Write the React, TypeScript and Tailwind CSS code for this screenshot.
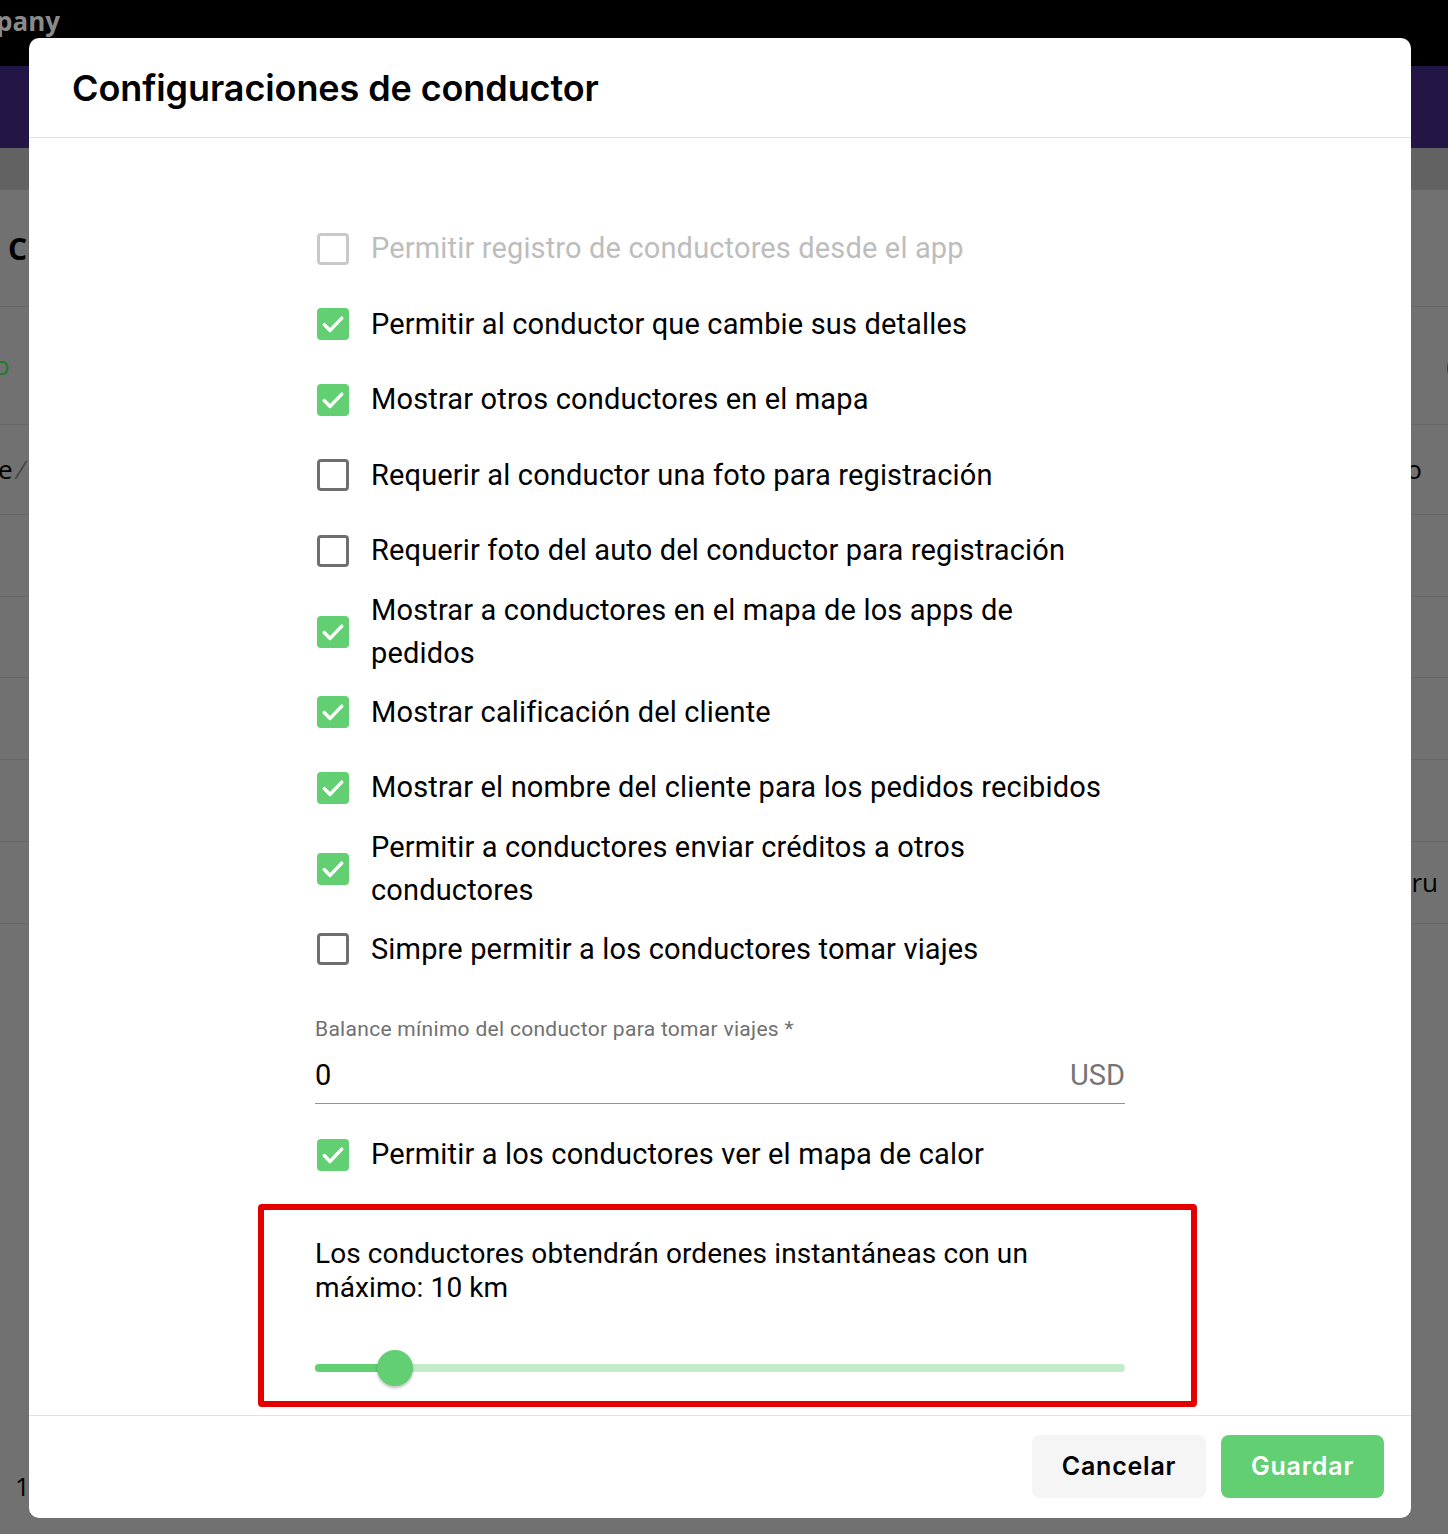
import { useState } from 'react';

type Opt = { label: string; checked: boolean; disabled?: boolean };

const OPTIONS: Opt[] = [
  { label: 'Permitir registro de conductores desde el app', checked: false, disabled: true },
  { label: 'Permitir al conductor que cambie sus detalles', checked: true },
  { label: 'Mostrar otros conductores en el mapa', checked: true },
  { label: 'Requerir al conductor una foto para registración', checked: false },
  { label: 'Requerir foto del auto del conductor para registración', checked: false },
  { label: 'Mostrar a conductores en el mapa de los apps de pedidos', checked: true },
  { label: 'Mostrar calificación del cliente', checked: true },
  { label: 'Mostrar el nombre del cliente para los pedidos recibidos', checked: true },
  { label: 'Permitir a conductores enviar créditos a otros conductores', checked: true },
  { label: 'Simpre permitir a los conductores tomar viajes', checked: false },
];

function Box({ checked, disabled }: { checked: boolean; disabled?: boolean }) {
  if (checked) {
    return (
      <span className="flex h-8 w-8 shrink-0 items-center justify-center rounded-[4px] bg-[#62cf72]">
        <svg viewBox="0 0 24 24" className="h-7 w-7" fill="none" stroke="white" strokeWidth={3} strokeLinecap="round" strokeLinejoin="round">
          <path d="M4.5 12.5l5 5 10-10.5" />
        </svg>
      </span>
    );
  }
  return (
    <span
      className={`block h-8 w-8 shrink-0 rounded-[4px] border-[3px] ${disabled ? 'border-[#c9c9c9]' : 'border-[#6f6f6f]'}`}
    />
  );
}

function CheckRow({ opt, onToggle }: { opt: Opt; onToggle: () => void }) {
  return (
    <label className="flex min-h-[75.5px] cursor-pointer items-center pl-[2px]" onClick={onToggle}>
      <Box checked={opt.checked} disabled={opt.disabled} />
      <span
        className={`ml-[22px] max-w-[740px] text-[29px] leading-[43px] tracking-[0.15px] ${opt.disabled ? 'text-[#bdbdbd]' : 'text-black'}`}
      >
        {opt.label}
      </span>
    </label>
  );
}

function BackgroundPage() {
  const rows = [
    { h: 'h-[117px]', left: <span className="ml-[8px] text-[30px] font-bold text-black">C</span>, right: null },
    { h: 'h-[118px]', left: <span className="-ml-[6px] text-[26px] text-[#1f7a2a]">o</span>, right: <span className="mr-[-6px] text-[26px] text-[#222]">(</span> },
    { h: 'h-[90px]', left: <span className="-ml-[2px] text-[26px] text-black">e <span className="text-[#444]">⁄</span></span>, right: <span className="mr-[26px] text-[26px] text-black">o</span> },
    { h: 'h-[82px]', left: null, right: null },
    { h: 'h-[81px]', left: null, right: null },
    { h: 'h-[82px]', left: null, right: null },
    { h: 'h-[82px]', left: null, right: null },
    { h: 'h-[82px]', left: null, right: <span className="mr-[10px] text-[26px] text-black">.ru</span> },
  ];
  return (
    <div className="flex h-full w-full flex-col overflow-hidden bg-[#717171] font-['Open_Sans',sans-serif]">
      <div className="flex h-[66px] shrink-0 items-start bg-black">
        <span className="-ml-[4px] mt-[2px] text-[26px] font-bold text-[#8a8a8a]">pany</span>
      </div>
      <div className="h-[82px] shrink-0 bg-[#231646]" />
      <div className="h-[42px] shrink-0 bg-[#626262]" />
      {rows.map((r, i) => (
        <div key={i} className={`flex ${r.h} shrink-0 items-center justify-between border-b border-[#666666]`}>
          <div>{r.left}</div>
          <div>{r.right}</div>
        </div>
      ))}
      <div className="flex flex-1 items-end pb-[28px]">
        <span className="ml-[15px] text-[26px] text-black">1</span>
      </div>
    </div>
  );
}

export default function App() {
  const [opts, setOpts] = useState<Opt[]>(OPTIONS);
  const [heat, setHeat] = useState(true);
  const [km] = useState(10);

  const toggle = (i: number) =>
    setOpts((prev) => prev.map((o, j) => (j === i && !o.disabled ? { ...o, checked: !o.checked } : o)));

  const pct = 80 / 810;

  return (
    <div className="relative h-[1534px] w-[1448px] overflow-hidden font-['Roboto',sans-serif]">
      <BackgroundPage />

      <div className="absolute left-[29px] top-[38px] flex h-[1480px] w-[1382px] flex-col rounded-[10px] bg-white">
        <div className="flex h-[100px] shrink-0 items-center border-b border-[#e2e2e2] pl-[43px]">
          <h1 className="font-['Inter',sans-serif] text-[36px] font-semibold tracking-[-0.1px] text-black">
            Configuraciones de conductor
          </h1>
        </div>

        <div className="flex-1 overflow-hidden">
          <div className="relative ml-[286px] w-[810px] pt-[73px]">
            {opts.map((o, i) => (
              <CheckRow key={i} opt={o} onToggle={() => toggle(i)} />
            ))}

            <div className="mt-[30px]">
              <div className="text-[21px] leading-[24px] tracking-[0.3px] text-[#707070]">Balance mínimo del conductor para tomar viajes *</div>
              <div className="flex items-center justify-between border-b border-[#949494] pb-[8px] pt-[14px]">
                <span className="text-[29px] leading-[40px] text-black">0</span>
                <span className="text-[29px] leading-[40px] text-[#757575]">USD</span>
              </div>
            </div>

            <div className="mt-[13px]">
              <CheckRow opt={{ label: 'Permitir a los conductores ver el mapa de calor', checked: heat }} onToggle={() => setHeat(!heat)} />
            </div>

            <div className="pt-[44px]">
              <p className="text-[28px] leading-[34px] tracking-[0.1px] text-black">
                Los conductores obtendrán ordenes instantáneas con un máximo: {km} km
              </p>
              <div className="relative mt-[45px] h-[36px]">
                <div className="absolute left-0 right-0 top-[14px] h-[8px] rounded-full bg-[#c3ecca]" />
                <div className="absolute left-0 top-[14px] h-[8px] rounded-full bg-[#62cf72]" style={{ width: `${pct * 100}%` }} />
                <div
                  className="absolute top-0 h-[36px] w-[36px] -translate-x-1/2 rounded-full bg-[#62cf72] shadow-[0_2px_3px_rgba(0,0,0,0.25)]"
                  style={{ left: `${pct * 100}%` }}
                />
              </div>
            </div>

            <div className="pointer-events-none absolute left-[-57px] top-[1066px] h-[203px] w-[939px] rounded-[4px] border-[6px] border-[#e50000]" />
          </div>
        </div>

        <div className="flex h-[103px] shrink-0 items-start justify-end gap-[15px] border-t border-[#e2e2e2] pr-[27px] pt-[19px]">
          <button className="h-[63px] w-[174px] rounded-[8px] bg-[#f5f5f5] font-['Inter',sans-serif] text-[25px] font-semibold tracking-[0.8px] text-black">
            Cancelar
          </button>
          <button className="h-[63px] w-[163px] rounded-[8px] bg-[#62cf72] font-['Inter',sans-serif] text-[25px] font-semibold tracking-[0.8px] text-white">
            Guardar
          </button>
        </div>
      </div>
    </div>
  );
}
